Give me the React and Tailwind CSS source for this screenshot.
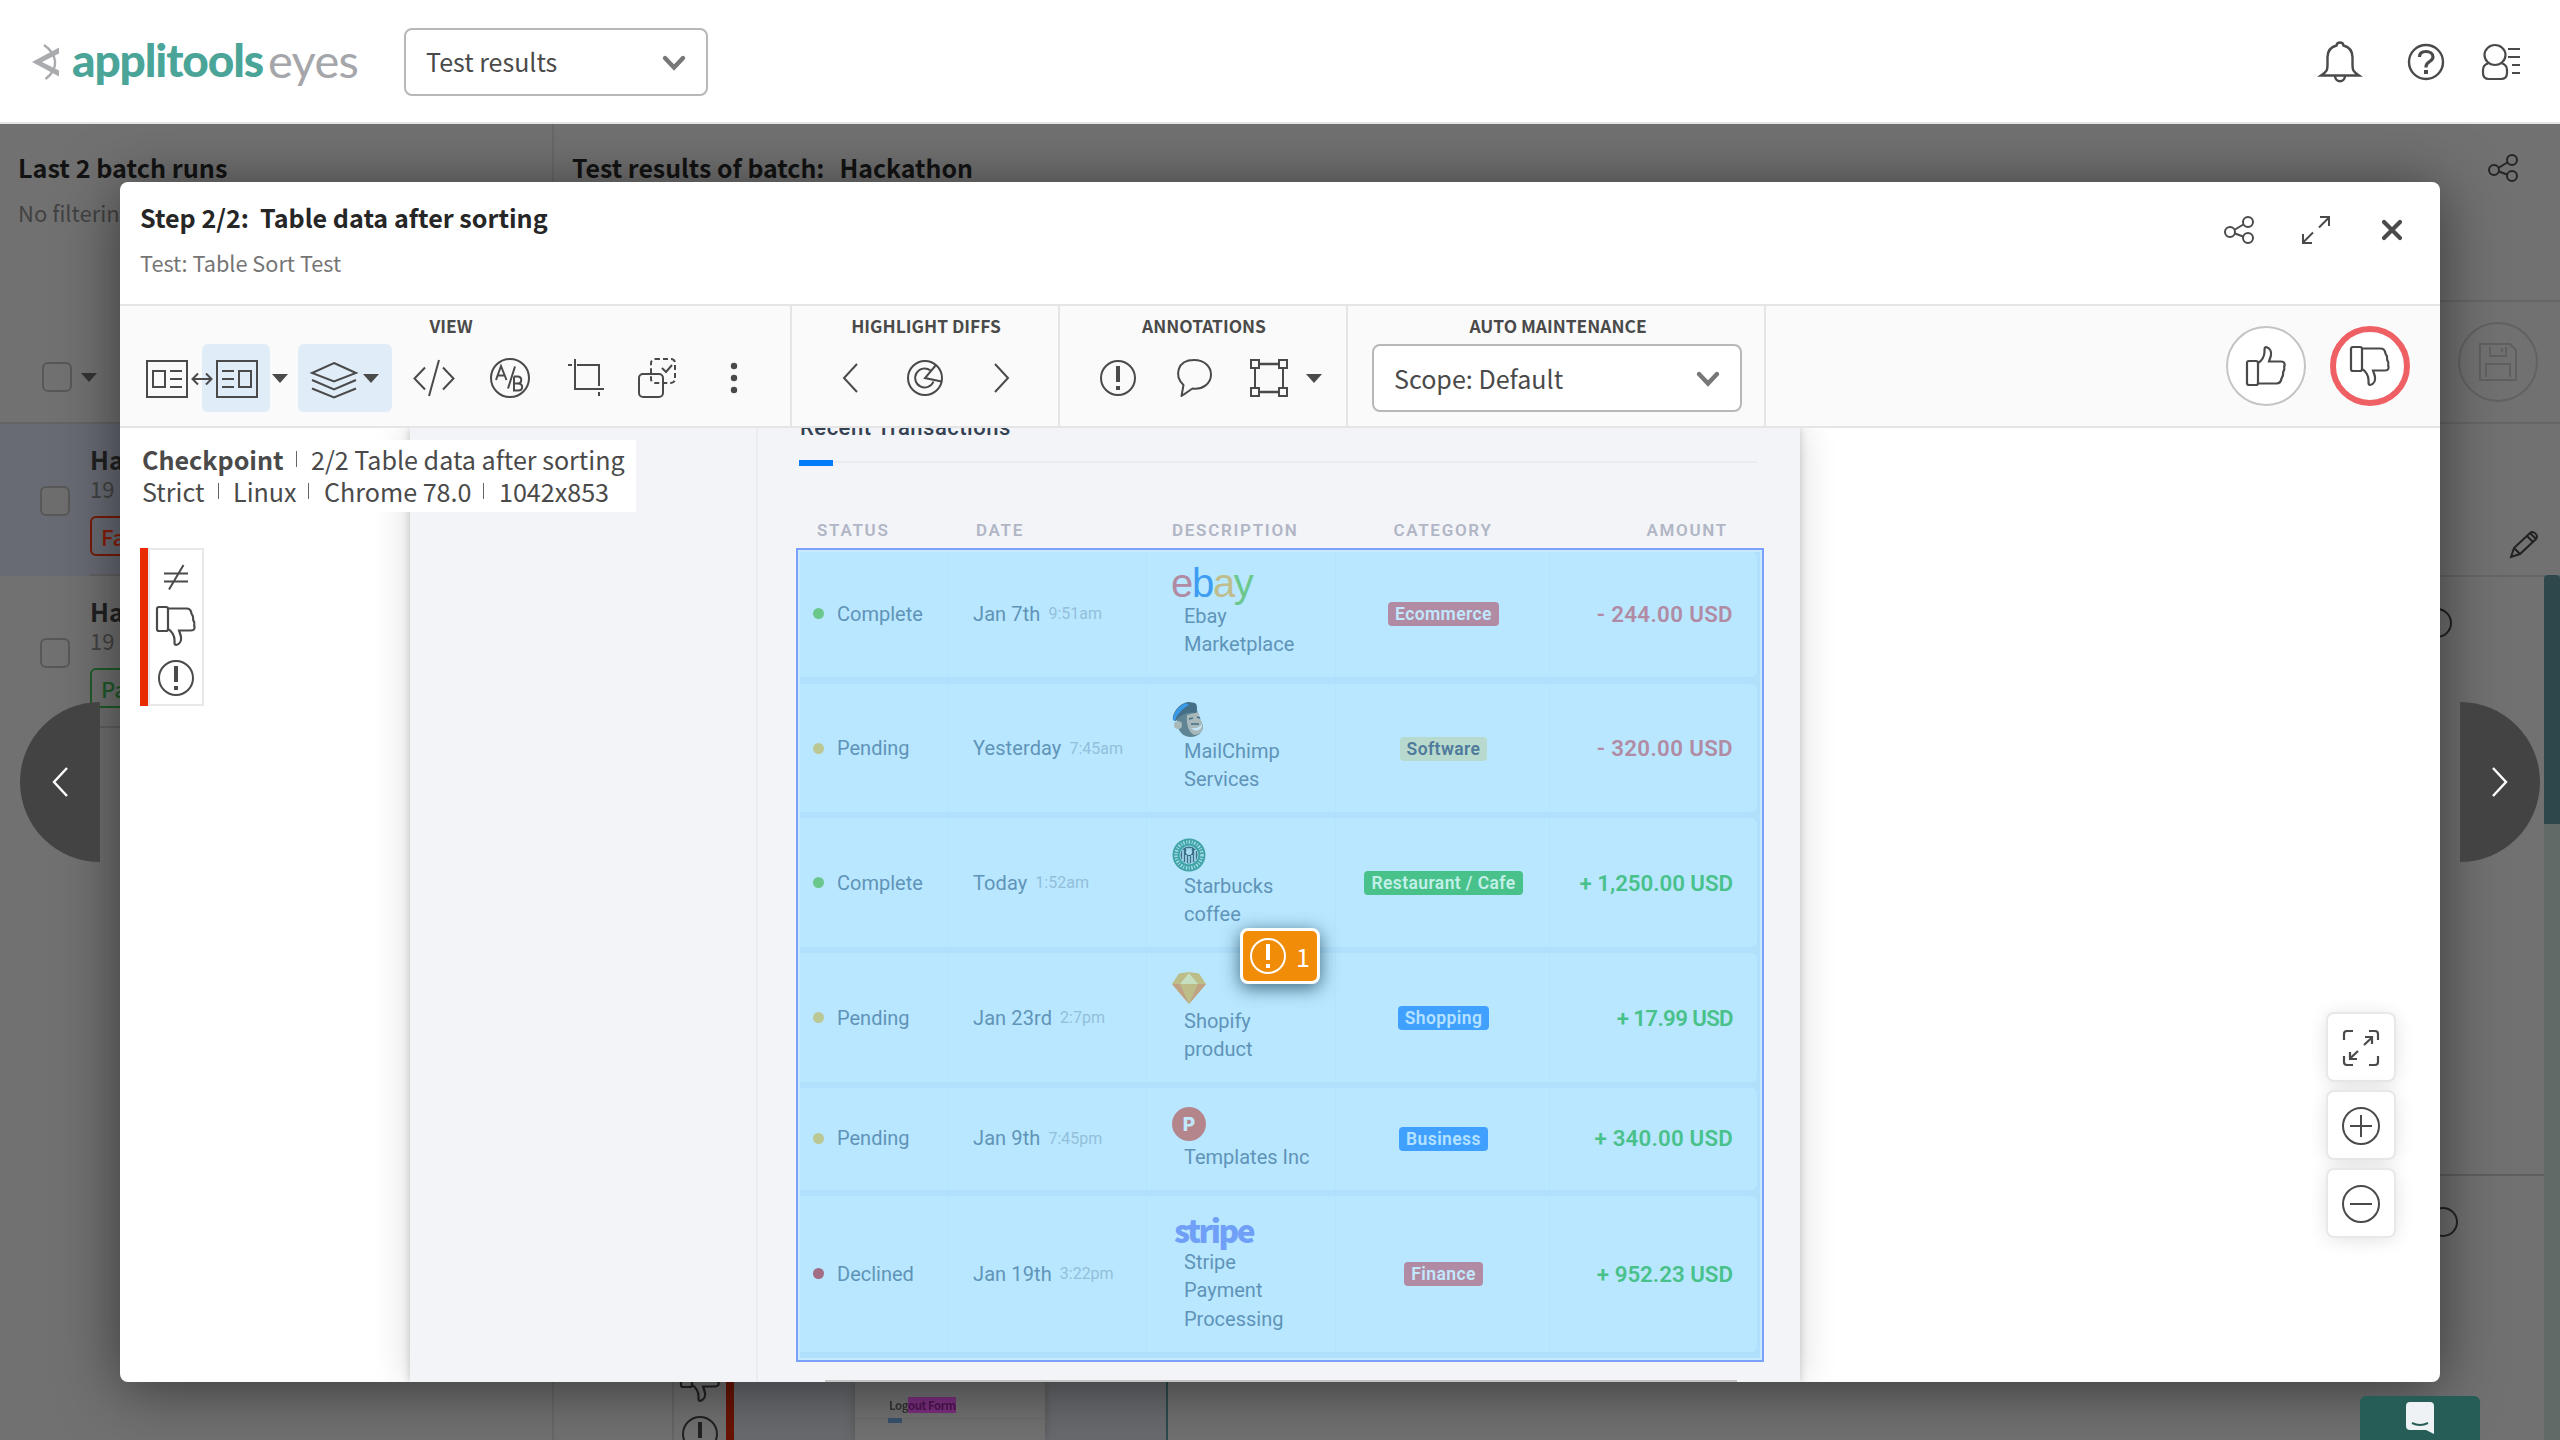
const SANS = "font-['Noto_Sans_CJK_SC',sans-serif]";

function Svg({ w, h, className = "", children, sw = 2 }) {
  return (
    <svg
      width={w}
      height={h}
      viewBox={`0 0 ${w} ${h}`}
      fill="none"
      stroke="currentColor"
      strokeWidth={sw}
      className={`shrink-0 overflow-visible ${className}`}
    >
      {children}
    </svg>
  );
}

/* ---------- icons ---------- */

const Caret = ({ className = "" }) => (
  <Svg w={16} h={9} className={className}>
    <path d="M0 0H16L8 9Z" fill="currentColor" stroke="none" />
  </Svg>
);

const SelectChevron = () => (
  <Svg w={22} h={14} sw={4.4} className="mt-px text-[#777]">
    <path d="M2 2L11 11.5L20 2" strokeLinecap="round" />
  </Svg>
);

const ThumbShape = () => (
  <>
    <rect x="1" y="15" width="11" height="24" rx="2" />
    <path d="M12 17C16 15 18.5 10 18.5 6C18.5 2 18.5 1 20 1C24 2 25.5 5.500 25 9C24.500 12 23.500 13.500 23 15.500H35C38.500 15.500 39.200 18 38.200 20.500C38.600 22.500 38.400 24.500 37.200 26C37.300 28.500 36.800 31 35.500 32.500C35 36 33.500 37.500 30.500 37.500H12" />
  </>
);

const ThumbUp = () => (
  <Svg w={40} h={40} sw={2.2}>
    <ThumbShape />
  </Svg>
);

const ThumbDown = ({ className = "" }) => (
  <Svg w={40} h={40} sw={2.2} className={className}>
    <g transform="matrix(1 0 0 -1 0 40)">
      <ThumbShape />
    </g>
  </Svg>
);

const Alert = ({ className = "" }) => (
  <Svg w={36} h={36} className={className}>
    <circle cx="18" cy="18" r="17" />
    <path d="M18 6V22M18 26V30" strokeWidth="4" />
  </Svg>
);

const Share = ({ className = "" }) => (
  <Svg w={30} h={28} className={className}>
    <circle cx="6" cy="16" r="5" />
    <circle cx="24" cy="6" r="5" />
    <circle cx="24" cy="22" r="5" />
    <path d="M11 13.500L19.300 8.500M11 17.500L19 20.500" />
  </Svg>
);

const ChevLeft = ({ sw = 2 }) => (
  <Svg w={16} h={30} sw={sw}>
    <path d="M15 1L2 15L15 29" />
  </Svg>
);

const ChevRight = ({ sw = 2 }) => (
  <Svg w={16} h={30} sw={sw}>
    <path d="M1 1L14 15L1 29" />
  </Svg>
);

const Check = ({ className = "" }) => (
  <div className={`box-border size-[30px] shrink-0 rounded-md border-2 border-[#585858] ${className}`} />
);

/* ---------- top bar ---------- */

function Header() {
  return (
    <header className="relative z-10 flex h-[124px] items-center border-b-2 border-[#e5e5e5] bg-white pt-[2px] text-[#4a4a4a]">
      <Svg w={28} h={36} className="ml-8 text-[#aaabae]">
        <path d="M0 18L27 3.500V9.500L10 18L27 26.500V32.500Z" fill="currentColor" stroke="none" />
        <path d="M12 1C25 10 28 24 13.500 35" strokeWidth="2.400" />
      </Svg>
      <span className="ml-[12px] -mt-[5px] w-[196px] whitespace-nowrap font-['Lato',sans-serif] text-[46px] leading-[60px] font-black tracking-[-1.100px] text-[#4aa598]">
        applitools
      </span>
      <span className="-mt-[5px] w-[94px] whitespace-nowrap font-['Lato',sans-serif] text-[47px] leading-[60px] font-normal tracking-[-0.700px] text-[#a5a6a9]">
        eyes
      </span>
      <div className="ml-[42px] flex h-[68px] w-[304px] items-center justify-between rounded-lg border-2 border-[#b8b8b8] pr-[21px] pl-[20px]">
        <span className="-mt-[2px] text-[25px] leading-8">Test results</span>
        <SelectChevron />
      </div>
      <div className="ml-auto flex items-center pr-[40px]">
        <Svg w={40} h={42} sw={2.4}>
          <path d="M1 34.500C7 30.500 7.500 29 7.500 24V16C7.500 9 11 6 16.500 4.500C17 0.500 23 0.500 23.500 4.500C29 6 32.500 9 32.500 16V24C32.500 29 33 30.500 39 34.500Z" />
          <path d="M15 35C15.500 42 24.500 42 25 35" />
        </Svg>
        <Svg w={36} h={36} className="ml-12" sw={2.4}>
          <circle cx="18" cy="18" r="17" />
          <path d="M11.500 13C11.500 9 14.500 7.500 18 7.500C22 7.500 25 9.500 25 13C25 17.500 18 17.500 18 22.500V23.500" strokeWidth="3.200" />
          <path d="M16 28H20" strokeWidth="4" />
        </Svg>
        <Svg w={38} h={36} className="ml-[38px]" sw={2.2}>
          <ellipse cx="13" cy="11" rx="10.500" ry="10" />
          <path d="M6 19.500C2.500 20.500 1 22.500 1 26V29C1 33 3 35 7 35H19C23 35 25 33 25 29V26C25 22.500 23.500 20.500 20 19.500" />
          <path d="M26 5H38M26 13H38M30 21H38M30 29H38" />
        </Svg>
      </div>
    </header>
  );
}

/* ---------- dimmed page below the dialog ---------- */

function BatchRow({ selected }) {
  return (
    <div className={selected ? "flex h-[152px] bg-[#686b74]" : "flex h-[152px]"}>
      <Check className={selected ? "mt-[62px] ml-10 bg-[#6e6e6e]" : "mt-[62px] ml-10"} />
      <div className="ml-5 flex grow flex-col border-b-2 border-[#626262] pt-[19px]">
        <span className="text-[25px] leading-8 font-bold text-[#212121]">Ha</span>
        <span className="mt-[-3px] text-[22px] leading-8 text-[#424242]">19</span>
        <div
          className={
            selected
              ? "mt-3 h-10 w-[120px] rounded-md border-2 border-[#7a1a08] pl-[9px] text-[22px] leading-[36px] font-medium text-[#8a1d08]"
              : "mt-3 h-10 w-[120px] rounded-md border-2 border-[#1f5c28] pl-[9px] text-[22px] leading-[36px] font-medium text-[#1f5c28]"
          }
        >
          {selected ? "Fa" : "Pa"}
        </div>
      </div>
    </div>
  );
}

function Underlay() {
  return (
    <div className="flex h-[1316px] bg-[#717171]">
      <aside className="w-[554px] shrink-0 border-r-2 border-[#686868]">
        <div className="h-[300px] border-b-2 border-[#646464] pt-[27px]">
          <div className="pl-[18px] text-[25.2px] leading-8 font-bold text-[#131313]">Last 2 batch runs</div>
          <div className="mt-[13px] pl-[18px] text-[22px] leading-8 text-[#424242]">No filtering</div>
          <div className="mt-[134px] ml-[42px] flex items-center gap-[9px] text-[#333]">
            <Check />
            <Caret className="mt-px" />
          </div>
        </div>
        <BatchRow selected />
        <BatchRow />
      </aside>
      <main className="flex grow flex-col">
        <div className="flex h-[178px] justify-between border-b-2 border-[#666] pt-[27px] pr-[42px] pl-[18px]">
          <div className="text-[24.900px] leading-8 font-bold whitespace-pre text-[#131313]">
            Test results of batch:<span className="ml-[15px]">Hackathon</span>
          </div>
          <Share className="mt-[3px] text-[#262626]" />
        </div>
        <div className="flex h-[122px] justify-end border-b-2 border-[#666] pt-5 pr-[22px] text-[#606060]">
          <div className="flex size-20 items-center justify-center rounded-full border-2 border-[#626262]">
            <Svg w={38} h={38}>
              <path d="M1 1H31L37 7V37H1Z" />
              <path d="M11 4V13H27V4M23 5V9M7 34V21H31V34" />
            </Svg>
          </div>
        </div>
        <div className="flex grow flex-col">
          <div className="flex h-[151px] items-end justify-end pr-[22px]">
            <Svg w={28} h={28} className="mb-[17px] text-[#222]">
              <path d="M1 27L4 18L20 3C23 0 29 5 26 9L10 24ZM4 18L10 24M17 6L23 12M20 3L26 9" />
            </Svg>
          </div>
          <div className="flex grow">
            <div className="grow border-t-2 border-[#666]">
              <div className="flex h-[599px] justify-end border-b-2 border-[#5e5e5e] pt-[31px] pr-[92px]">
                <div className="size-[30px] rounded-full border-2 border-[#222]" />
              </div>
              <div className="flex h-[264px] items-start justify-between">
                <div className="ml-[118px] flex h-full items-end border-l-2 border-[#666]">
                  <div className="flex h-[58px] w-[52px] flex-col items-center overflow-hidden text-[#222]">
                    <ThumbDown className="-mt-5" />
                    <Alert className="mt-[14px]" />
                  </div>
                  <div className="h-[58px] w-2 bg-[#6a1405]" />
                  <div className="flex h-[58px] w-[434px] border-r-2 border-[#2c4a4c] bg-[#696b6f] pl-[121px]">
                    <div className="w-[190px] bg-[#727272] shadow-[0_0_8px_#555]">
                      <div className="h-[37px] border-b border-[#6b6b6b] pt-[15px] pl-[34px]">
                        <div className="flex h-4 w-[63px] items-center text-[11.500px] leading-4 font-bold tracking-[-0.500px] whitespace-nowrap text-[#333] blur-[0.700px]">
                          <span>Log</span>
                          <span className="bg-[#7d2f80] text-[#4b1450]">out Form</span>
                        </div>
                      </div>
                      <div className="-mt-px ml-[33px] h-[5px] w-[14px] bg-[#37536f] blur-[0.700px]" />
                    </div>
                  </div>
                </div>
                <div className="mt-[31px] mr-[86px] size-[30px] rounded-full border-2 border-[#222]" />
              </div>
            </div>
            <div className="w-4 bg-[#606b68]">
              <div className="h-[249px] rounded-t bg-[#2e474b]" />
            </div>
          </div>
        </div>
      </main>
    </div>
  );
}

function Backdrop() {
  return (
    <div className="absolute inset-x-0 top-[124px] bottom-0 overflow-hidden">
      <div className="absolute top-[58px] left-[120px] h-[1200px] w-[2320px] rounded-lg shadow-[0_6px_60px_rgba(0,0,0,0.5)]" />
    </div>
  );
}

/* ---------- dialog toolbar ---------- */

function Group({ label, className, labelClass = "", children }) {
  return (
    <div className={`h-[120px] shrink-0 border-r-2 border-[#e5e5e5] pt-2 ${className}`}>
      <div className={`text-center text-[17.400px] leading-6 font-bold ${labelClass}`}>{label}</div>
      <div className="mt-[6px] flex h-[68px] items-center">{children}</div>
    </div>
  );
}

function Toolbar() {
  return (
    <div className="flex h-[124px] border-y-2 border-[#e5e5e5] bg-[#fafafa] text-[#4a4a4a]">
      <Group label="VIEW" className="w-[672px]" labelClass="pr-2">
        <Svg w={42} h={38} className="mt-[2px] ml-[26px]">
          <path d="M1 1H41V37H1ZM7 11H19V27H7ZM24 11H36M24 19H36M24 27H36" />
        </Svg>
        <Svg w={22} h={14} className="relative z-10 mt-[2px] mr-[-11px] ml-[3px]">
          <path d="M1 7H21M7 1.500L1.500 7L7 12.500M15 1.500L20.500 7L15 12.500" />
        </Svg>
        <div className="flex h-full w-[68px] items-center rounded-md bg-[#e0ecf8] pl-[14px]">
          <Svg w={42} h={38} className="mt-[2px]">
            <path d="M1 1H41V37H1ZM23 11H35V27H23ZM6 11H18M6 19H18M6 27H18" />
          </Svg>
        </div>
        <Caret className="ml-[2px]" />
        <div className="ml-[10px] flex h-full w-[94px] items-center rounded-md bg-[#e0ecf8] pl-[13px]">
          <Svg w={46} h={36} className="mt-[3px]">
            <path d="M23 1L45 11L23 19.500L1 11ZM1 18L23 27.500L45 18M1 26.500L23 35.500L45 26.500" />
          </Svg>
          <Caret className="ml-[6px]" />
        </div>
        <Svg w={42} h={36} className="ml-[21px]">
          <path d="M12 7.500L1.500 18.500L12 29.500M30 7.500L40.500 18.500L30 29.500M26 0L16 36" />
        </Svg>
        <Svg w={40} h={40} className="ml-[35px]">
          <circle cx="20" cy="20" r="19" />
          <path d="M6 22L11 8L16.500 22M8 17.500H15M25 8.500L18 30.500M24 18.500V32.500H28C33.500 32.500 33.500 25.500 28 25.500H24M24 18.500H27.500C32.500 18.500 32.500 25.500 27.500 25.500" />
        </Svg>
        <Svg w={36} h={38} className="ml-[38px]">
          <path d="M0 6H4M7 0V30H36M9 6H31V27M31 33V37" />
        </Svg>
        <Svg w={38} h={40} className="ml-[34px]">
          <rect x="1" y="16" width="24" height="23" rx="4" />
          <rect x="13" y="1" width="24" height="24" rx="4" strokeDasharray="5 3" />
          <path d="M24 10L28 14L34 7" />
        </Svg>
        <Svg w={8} h={32} className="ml-[54px]">
          <g fill="currentColor" stroke="none">
            <circle cx="4" cy="4" r="3.200" />
            <circle cx="4" cy="16" r="3.200" />
            <circle cx="4" cy="28" r="3.200" />
          </g>
        </Svg>
      </Group>
      <Group label="HIGHLIGHT DIFFS" className="w-[268px] pl-[50px]" labelClass="-ml-[48px]">
        <ChevLeft />
        <Svg w={36} h={36} className="ml-[49px]">
          <circle cx="18" cy="18" r="17" />
          <path d="M29 5L18 18L34.500 21.500M23.500 10.500A9.500 9.500 0 1 0 26.500 21.500" />
        </Svg>
        <div className="ml-[51px]">
          <ChevRight />
        </div>
      </Group>
      <Group label="ANNOTATIONS" className="w-[288px] pl-[40px]" labelClass="-ml-[38px]">
        <Alert />
        <Svg w={36} h={38} className="ml-10">
          <path d="M5.500 37L7.500 26C-2 17 1 1 18 1C29 1 35 8 35 15.500C35 25 26 31 16.500 29.500C13 31.500 9 35 5.500 37Z" strokeLinejoin="round" />
        </Svg>
        <Svg w={38} h={38} className="ml-[38px]">
          <path d="M1 1H9V9H1ZM29 1H37V9H29ZM1 29H9V37H1ZM29 29H37V37H29ZM5 10V28M33 10V28" />
          <path d="M10 5H28M10 33H28" strokeWidth="2.400" />
        </Svg>
        <Caret className="ml-[18px]" />
      </Group>
      <Group label="AUTO MAINTENANCE" className="w-[418px] pl-6" labelClass="pr-[20px]">
        <div className="flex h-[68px] w-[370px] shrink-0 items-center justify-between rounded-lg border-2 border-[#b8b8b8] bg-white pr-[21px] pl-5">
          <span className="-mt-px text-[25.100px] leading-8">Scope: Default</span>
          <SelectChevron />
        </div>
      </Group>
      <div className="ml-auto flex items-center gap-6 pr-[30px]">
        <div className="flex size-20 items-center justify-center rounded-full border-2 border-[#c4c4c4] bg-white">
          <ThumbUp />
        </div>
        <div className="flex size-20 items-center justify-center rounded-full border-[6px] border-[#ee6063] bg-white">
          <ThumbDown />
        </div>
      </div>
    </div>
  );
}

/* ---------- captured page ---------- */

const EbayLogo = () => (
  <div className="mt-[13px] ml-[-1px] h-9 font-['Liberation_Sans',sans-serif] text-[40px] leading-9 tracking-[-1.300px] whitespace-nowrap">
    <span className="text-[#b18ba4]">e</span>
    <span className="text-[#3f9cf3]">b</span>
    <span className="text-[#bfbd8c]">a</span>
    <span className="text-[#6cc78c]">y</span>
  </div>
);

const MailChimpLogo = () => (
  <Svg w={32} h={35} className="mt-[18px] mb-[-1px]">
    <g stroke="none">
      <path d="M5 18C4 8 12 2 24 5L27 14L31 24C31 31 25 35 19 35C12 35 7 30 6 25Z" fill="#5f8494" />
      <path d="M15 13L26 10L31 24C31 30 27 33 22 33C17 30 14 24 15 13Z" fill="#a7b9bb" />
      <path d="M1 18C0 10 9 0 17 0L23 1C26 3 25 8 24 11C14 9 8 13 4 19Z" fill="#456e87" />
      <path d="M1 18C1 10 8 3 14 1L17 3C10 7 5 12 3 19Z" fill="#379be8" />
      <circle cx="6" cy="23" r="4" fill="#a7b9bb" />
      <path d="M19 26C23 27 27 26 30 22C30 28 24 31 19 26Z" fill="#c5e6f8" />
    </g>
    <path d="M17 17L21 16M25 15L28 16M19 22H27" stroke="#456e87" strokeWidth="1.500" />
  </Svg>
);

const StarbucksLogo = () => (
  <Svg w={34} h={34} className="mt-[20px] mb-[-1px]">
    <circle cx="17" cy="17" r="16.500" fill="#3fa3a5" stroke="none" />
    <circle cx="17" cy="17" r="13" stroke="#a2dbe9" strokeWidth="3.500" strokeDasharray="1.500 1.600 1 1.400" />
    <circle cx="17" cy="17" r="9" fill="#3c6f88" stroke="#9ad5e6" strokeWidth="1" />
    <path d="M11 12V23M14 17V25M20 17V25M23 12V23M14 11H20M17 18V25" stroke="#a8dcf2" strokeWidth="1.600" />
    <circle cx="17" cy="14" r="3" fill="#a8dcf2" stroke="none" />
  </Svg>
);

const SketchLogo = () => (
  <Svg w={34} h={33} className="mt-[19px] mb-px">
    <g stroke="none">
      <path d="M7 1.500L17 0L27 1.500L34 12L17 32L0 12Z" fill="#bcbd88" />
      <path d="M17 1L26 12H8Z" fill="#c5dfc0" />
      <path d="M0 12H8L17 32ZM34 12H26L17 32Z" fill="#c0a184" />
    </g>
  </Svg>
);

const PinLogo = () => (
  <div className="mt-[19px] mb-[1px] flex size-[34px] items-center justify-center rounded-full bg-[#b5858c] font-['Inter',sans-serif] text-[19px] leading-none font-extrabold text-[#c2e8fb]">
    P
  </div>
);

const StripeLogo = () => (
  <div className="mt-[15px] h-9 pl-[2px] font-['Noto_Sans_CJK_SC',sans-serif] text-[31.500px] leading-9 font-black tracking-[-2.400px] text-[#6f9ff6]">
    stripe
  </div>
);

const RED = "bg-[#b18ba4] text-[#c2e8fd]";
const BLUE = "bg-[#40a0ff] text-[#b5e2ff]";
const ROWS = [
  { h: "h-[125px] mb-[7px]", up: "pb-[2px]", dot: "bg-[#6cc78c]", status: "Complete", date: "Jan 7th", time: "9:51am", Logo: EbayLogo, desc: ["Ebay", "Marketplace"], cat: "Ecommerce", catCls: RED, amt: "- 244.00 USD", amtCls: "text-[#b18ba4] tracking-[0.350px]" },
  { h: "h-[128px] mb-[6px]", up: "", dot: "bg-[#bcc893]", status: "Pending", date: "Yesterday", time: "7:45am", Logo: MailChimpLogo, desc: ["MailChimp", "Services"], cat: "Software", catCls: "bg-[#b8d9cd] text-[#4f7a9b]", amt: "- 320.00 USD", amtCls: "text-[#b18ba4] tracking-[0.350px]" },
  { h: "h-[129px] mb-[6px]", up: "", dot: "bg-[#6cc78c]", status: "Complete", date: "Today", time: "1:52am", Logo: StarbucksLogo, desc: ["Starbucks", "coffee"], cat: "Restaurant / Cafe", catCls: "bg-[#49c18b] text-[#c2f0e8]", amt: "+ 1,250.00 USD", amtCls: "text-[#49c18b] tracking-[-0.050px]" },
  { h: "h-[129px] mb-[6px]", up: "", dot: "bg-[#bcc893]", status: "Pending", date: "Jan 23rd", time: "2:7pm", Logo: SketchLogo, desc: ["Shopify", "product"], cat: "Shopping", catCls: BLUE, amt: "+ 17.99 USD", amtCls: "text-[#49c18b] tracking-[-0.650px]" },
  { h: "h-[102px] mb-[6px]", up: "pb-[2px]", dot: "bg-[#bcc893]", status: "Pending", date: "Jan 9th", time: "7:45pm", Logo: PinLogo, desc: ["Templates Inc"], cat: "Business", catCls: BLUE, amt: "+ 340.00 USD", amtCls: "text-[#49c18b] tracking-[0.200px]" },
  { h: "h-[156px] mb-[6px]", up: "pb-[1px]", dot: "bg-[#a36d86]", status: "Declined", date: "Jan 19th", time: "3:22pm", Logo: StripeLogo, desc: ["Stripe", "Payment", "Processing"], cat: "Finance", catCls: RED, amt: "+ 952.23 USD", amtCls: "text-[#49c18b]" },
];

const COLS = "grid grid-cols-[149px_198px_189px_214px_207px]";

function Row({ r }) {
  const cell = `flex items-center border-r border-[#b4e3fd] ${r.up}`;
  return (
    <div className={`${COLS} w-[957px] overflow-hidden rounded-r-md bg-[#b9e7ff] text-[20px] leading-7 text-[#5f94b8] ${r.h}`}>
      <div className={`${cell} pl-[13px]`}>
        <span className={`mr-[13px] size-[11px] rounded-full ${r.dot}`} />
        {r.status}
      </div>
      <div className={`${cell} pl-[24px] tracking-[0.100px]`}>
        {r.date}
        <span className="mt-px ml-2 text-[16px] tracking-normal text-[#93bfdb]">{r.time}</span>
      </div>
      <div className="border-r border-[#b4e3fd] pl-[25px]">
        <r.Logo />
        <div className="pt-px pl-[12px] leading-[28.400px]">
          {r.desc.map((d) => (
            <div key={d}>{d}</div>
          ))}
        </div>
      </div>
      <div className={`${cell} justify-center`}>
        <span className={`mt-px ml-[2px] h-6 rounded px-[7px] text-[17.500px] leading-[25px] font-semibold tracking-[0.400px] whitespace-nowrap ${r.catCls}`}>{r.cat}</span>
      </div>
      <div className={`flex items-center justify-end pr-[24px] text-[22.300px] font-semibold whitespace-nowrap ${r.up} ${r.amtCls}`}>{r.amt}</div>
    </div>
  );
}

function CapturedPage() {
  return (
    <div className="ml-[290px] flex h-full w-[1390px] bg-[#f3f4f8] font-['Roboto',sans-serif] shadow-[0_0_36px_rgba(0,0,0,0.16),0_0_8px_rgba(0,0,0,0.18)]">
      <div className="w-[348px] shrink-0 border-r-2 border-[#ebecf1]" />
      <div className="pl-[38px]">
        <div className="mt-[-14px] ml-1 text-[22px] leading-7 font-medium tracking-[0.500px] text-[#334152]">Recent Transactions</div>
        <div className="mt-[18px] ml-[3px] flex h-[6px] w-[958px]">
          <div className="w-[34px] bg-[#047bf8]" />
          <div className="mt-px h-[2px] grow bg-[#e9ebf0]" />
        </div>
        <div className={`${COLS} mt-[54px] ml-1 w-[957px] text-[17px] leading-5 font-semibold tracking-[1.700px] text-[#b0b6c5]`}>
          <div className="pl-[17px]">STATUS</div>
          <div className="pl-[27px]">DATE</div>
          <div className="pl-[25px]">DESCRIPTION</div>
          <div className="text-center">CATEGORY</div>
          <div className="pr-[29px] text-right">AMOUNT</div>
        </div>
        <div className="mt-2 h-[814px] w-[968px] border-2 border-[#7ba0ff] bg-[#c8eaff] p-[2px]">
          <div className="h-[806px] w-[960px] bg-[#b0e0fc]">
            {ROWS.map((r) => (
              <Row key={r.amt} r={r} />
            ))}
          </div>
        </div>
        <div className="mt-[18px] ml-[29px] h-[2px] w-[912px] bg-[#c4c4c4]" />
      </div>
    </div>
  );
}

const Bar = ({ className = "" }) => <span className={`h-4 w-px bg-[#666] ${className}`} />;

function ZoomButton({ children }) {
  return (
    <div className="flex h-[66px] w-[66px] items-center justify-center rounded-md bg-white pt-[2px] shadow-[0_0_0_2px_#e8e8e8,0_2px_20px_rgba(0,0,0,0.14)]">
      {children}
    </div>
  );
}

function Dialog() {
  return (
    <div className="absolute top-[182px] left-[120px] flex h-[1200px] w-[2320px] flex-col overflow-hidden rounded-lg bg-white text-[#4a4a4a]">
      <div className="flex h-[122px] shrink-0 justify-between">
        <div className="pt-[19px] pl-5">
          <div className="text-[25.100px] leading-8 font-bold text-[#262626]">
            Step 2/2:<span className="ml-[11px]">Table data after sorting</span>
          </div>
          <div className="mt-[14px] text-[21.700px] leading-8 text-[#757575]">Test: Table Sort Test</div>
        </div>
        <div className="flex h-[96px] items-center pr-[37px]">
          <Share />
          <Svg w={28} h={28} className="ml-12">
            <path d="M17 11.500L27 1.500M18 1H27V10M11 16.500L1 26.500M1 18V27H10" />
          </Svg>
          <Svg w={22} h={22} sw={4.200} className="ml-[51px]">
            <path d="M3 3L19 19M19 3L3 19" strokeLinecap="round" />
          </Svg>
        </div>
      </div>
      <Toolbar />
      <div className="relative h-[954px] overflow-hidden">
        <CapturedPage />

        <div className="absolute top-3 left-0 h-[72px] w-[516px] bg-white pt-[3px] pl-[22px] text-[25.100px] leading-8 whitespace-nowrap">
          <div className="flex h-8 items-center">
            <b className="w-[141px]">Checkpoint</b>
            <Bar className="mr-[14px] ml-[13px]" />
            <span>2/2 Table data after sorting</span>
          </div>
          <div className="flex h-8 items-center">
            <span className="w-[62px]">Strict</span>
            <Bar className="mr-[14px] ml-[14px]" />
            <span className="w-[62px]">Linux</span>
            <Bar className="mr-[15px] ml-[13px]" />
            <span className="w-[146px]">Chrome 78.0</span>
            <Bar className="mr-[15px] ml-[13px]" />
            <span>1042x853</span>
          </div>
        </div>

        <div className="absolute top-[120px] left-5 flex h-[158px] w-16">
          <div className="w-2 bg-[#e92c00]" />
          <div className="flex grow flex-col items-center border-2 border-[#e8e8e8] bg-white pt-[15px]">
            <Svg w={24} h={25}>
              <path d="M0 8.500H24M0 16.500H24M19.500 0L5 24.500" />
            </Svg>
            <ThumbDown className="mt-4 -ml-[1px]" />
            <Alert className="mt-[14px]" />
          </div>
        </div>

        <div className="absolute top-[500px] left-[1120px] flex h-14 w-20 items-center rounded-lg border-[3px] border-white bg-[#f08c08] pl-[7px] text-white shadow-[0_4px_18px_rgba(20,60,80,0.75)]">
          <Alert />
          <span className="-mt-px ml-[10px] text-[25px] leading-8">1</span>
        </div>

        <div className="absolute top-[586px] left-[2208px] flex flex-col gap-3">
          <ZoomButton>
            <Svg w={36} h={36} sw={2.200}>
              <path d="M1 10V4Q1 1 4 1H10M26 1H32Q35 1 35 4V10M35 26V32Q35 35 32 35H26M10 35H4Q1 35 1 32V26" />
              <path d="M21 15L29 7.500M22 7H29V14M15 21L7 28.500M7 22V29H14" />
            </Svg>
          </ZoomButton>
          <ZoomButton>
            <Svg w={38} h={38}>
              <circle cx="19" cy="19" r="18" />
              <path d="M8 19H30M19 8V30" />
            </Svg>
          </ZoomButton>
          <ZoomButton>
            <Svg w={38} h={38}>
              <circle cx="19" cy="19" r="18" />
              <path d="M8 19H30" />
            </Svg>
          </ZoomButton>
        </div>
      </div>
    </div>
  );
}

export default function App() {
  return (
    <div className={`relative h-[1440px] w-[2560px] overflow-hidden bg-white ${SANS}`}>
      <Header />
      <Underlay />
      <Backdrop />
      <Dialog />
      <div className="absolute top-[702px] left-5 flex h-40 w-20 items-center rounded-l-full bg-[#434343] pl-8 text-white">
        <ChevLeft sw={2.4} />
      </div>
      <div className="absolute top-[702px] right-5 flex h-40 w-20 items-center rounded-r-full bg-[#434343] pl-8 text-white">
        <ChevRight sw={2.4} />
      </div>
      <div className="absolute top-[1396px] left-[2360px] flex h-[60px] w-[120px] justify-center rounded-md bg-[#265e57] pt-[6px] text-[#265e57]">
        <Svg w={28} h={32}>
          <path d="M4 0H24Q28 0 28 4V32L20 28H4Q0 28 0 24V4Q0 0 4 0Z" fill="#eef2f5" stroke="none" />
          <path d="M6 21Q14 25 22 21" />
        </Svg>
      </div>
    </div>
  );
}
